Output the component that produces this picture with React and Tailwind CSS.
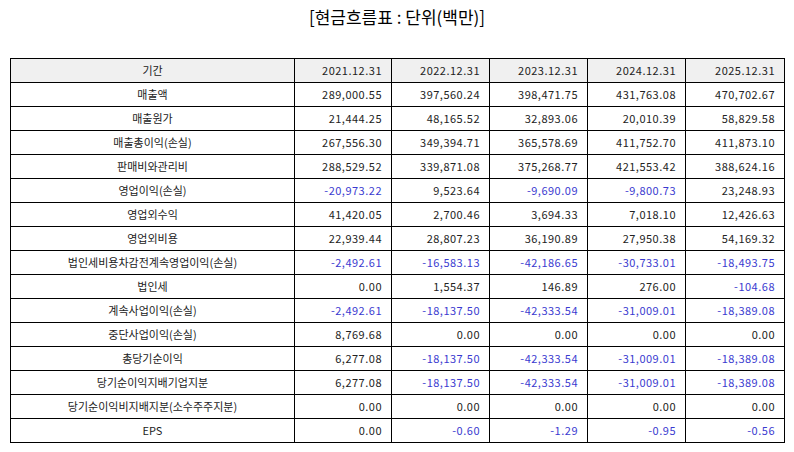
import React from 'react'

const years = ['2021.12.31', '2022.12.31', '2023.12.31', '2024.12.31', '2025.12.31']

const rows = [
    ['매출액', '289,000.55', '397,560.24', '398,471.75', '431,763.08', '470,702.67'],
    ['매출원가', '21,444.25', '48,165.52', '32,893.06', '20,010.39', '58,829.58'],
    ['매출총이익(손실)', '267,556.30', '349,394.71', '365,578.69', '411,752.70', '411,873.10'],
    ['판매비와관리비', '288,529.52', '339,871.08', '375,268.77', '421,553.42', '388,624.16'],
    ['영업이익(손실)', '-20,973.22', '9,523.64', '-9,690.09', '-9,800.73', '23,248.93'],
    ['영업외수익', '41,420.05', '2,700.46', '3,694.33', '7,018.10', '12,426.63'],
    ['영업외비용', '22,939.44', '28,807.23', '36,190.89', '27,950.38', '54,169.32'],
    ['법인세비용차감전계속영업이익(손실)', '-2,492.61', '-16,583.13', '-42,186.65', '-30,733.01', '-18,493.75'],
    ['법인세', '0.00', '1,554.37', '146.89', '276.00', '-104.68'],
    ['계속사업이익(손실)', '-2,492.61', '-18,137.50', '-42,333.54', '-31,009.01', '-18,389.08'],
    ['중단사업이익(손실)', '8,769.68', '0.00', '0.00', '0.00', '0.00'],
    ['총당기순이익', '6,277.08', '-18,137.50', '-42,333.54', '-31,009.01', '-18,389.08'],
    ['당기순이익지배기업지분', '6,277.08', '-18,137.50', '-42,333.54', '-31,009.01', '-18,389.08'],
    ['당기순이익비지배지분(소수주주지분)', '0.00', '0.00', '0.00', '0.00', '0.00'],
    ['EPS', '0.00', '-0.60', '-1.29', '-0.95', '-0.56'],
]

const App = () => {
    return (
        <div className="bg-white w-[794px] h-[452px] px-[10px] text-[#222]" style={{ fontFamily: '"Noto Sans CJK KR", "Noto Sans", sans-serif' }}>
            <div className="h-[58px] pt-[5px] text-center text-[17px] leading-[24px] text-black">[현금흐름표 : 단위(백만)]</div>
            <table className="w-[774px] table-fixed border-collapse text-[11px]">
                <colgroup>
                    <col className="w-[284px]" />
                    <col className="w-[97px]" />
                    <col className="w-[98px]" />
                    <col className="w-[98px]" />
                    <col className="w-[98px]" />
                    <col className="w-[99px]" />
                </colgroup>
                <thead>
                    <tr className="bg-[#f0f0f0] h-[24px]">
                        <th className="border border-black font-normal text-center p-0">기간</th>
                        {years.map(y => (
                            <th key={y} className="border border-black font-normal text-right pr-[9px] p-0 tracking-[0.5px]">{y}</th>
                        ))}
                    </tr>
                </thead>
                <tbody>
                    {rows.map(row => (
                        <tr key={row[0]} className="h-[24px]">
                            <td className="border border-black text-center p-0">{row[0]}</td>
                            {row.slice(1).map((v, i) => (
                                <td key={i} className={'border border-black text-right pr-[9px] p-0 tracking-[0.5px] ' + (v.startsWith('-') ? 'text-[#3a3ad0]' : '')}>{v}</td>
                            ))}
                        </tr>
                    ))}
                </tbody>
            </table>
        </div>
    )
}

export default App
